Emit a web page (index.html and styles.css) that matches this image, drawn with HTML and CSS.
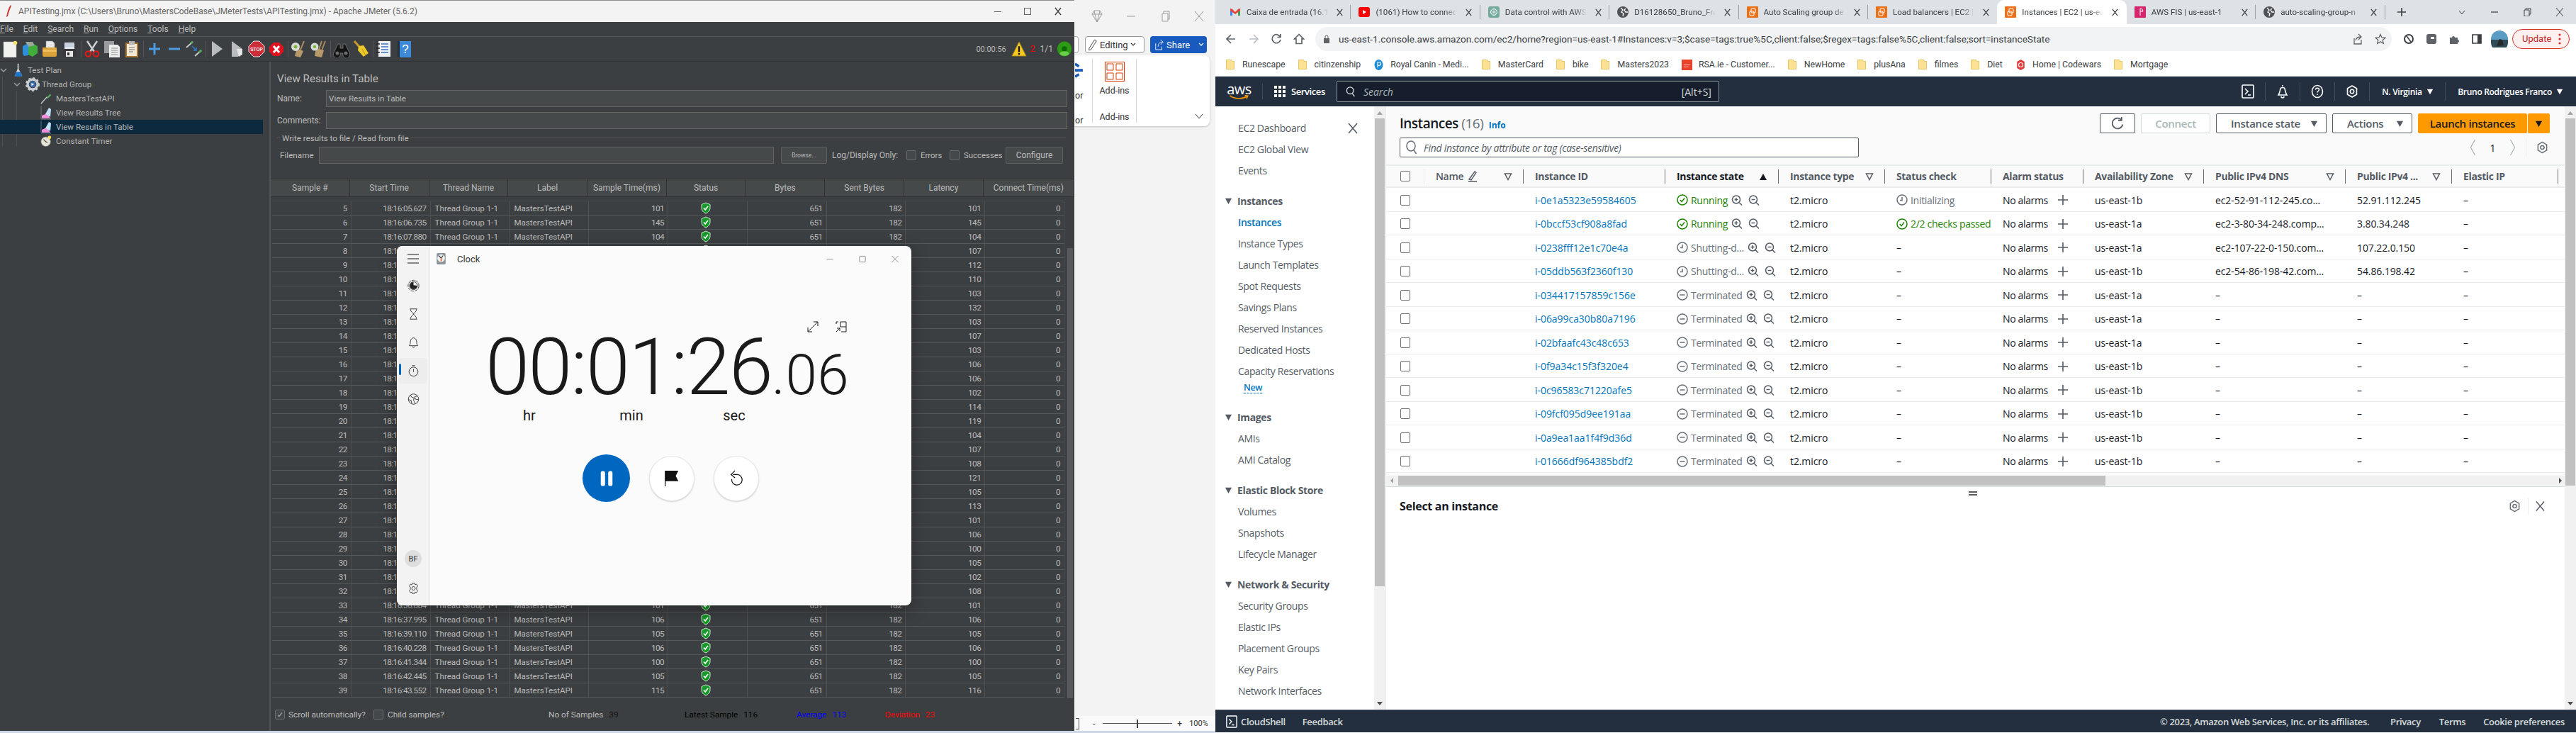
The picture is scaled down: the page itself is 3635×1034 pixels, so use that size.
FILE: index.html
```html
<!DOCTYPE html>
<html lang="en">
<head>
<meta charset="utf-8">
<title>Desktop</title>
<link rel="stylesheet" href="styles.css">
</head>
<body>
<svg class="defs" width="0" height="0">
  <symbol id="i-new" viewBox="0 0 24 24"><path d="M3 2h15l3 3v19H3z" fill="#f1f1ee" stroke="#aaa" stroke-width=".6"/><circle cx="19.500" cy="3.500" r="2.800" fill="#f6e26b"/></symbol>
  <symbol id="i-tpl" viewBox="0 0 24 24"><path d="M2 8l8-4v17l-6 1-2-3z" fill="#2f8fd8"/><path d="M10 9l7-4 6 3v10l-7 5-6-3z" fill="#3fae3a"/><path d="M6 2l10 0 3 5-9 2z" fill="#9aa7a0"/></symbol>
  <symbol id="i-open" viewBox="0 0 24 24"><path d="M7 1h9l3 3v9H7z" fill="#e8e8e8" stroke="#999" stroke-width=".5"/><path d="M2 10h20v11a2 2 0 0 1-2 2H4a2 2 0 0 1-2-2z" fill="#dca33a"/><path d="M2 13h20v3H2z" fill="#efc05c"/></symbol>
  <symbol id="i-save" viewBox="0 0 24 24"><path d="M2 2h20v21H2z" fill="#3a3a3e"/><path d="M5 3h14v9H5z" fill="#dfe6ee"/><path d="M6 5h12M6 8h12" stroke="#9fb2c6"/><path d="M7 15h10v8H7z" fill="#e6e6e6"/><path d="M9 17h3v4H9z" fill="#333"/></symbol>
  <symbol id="i-cut" viewBox="0 0 24 24"><path d="M5 1l10 15M19 1L9 16" stroke="#cfd2d4" stroke-width="2.400"/><circle cx="6.500" cy="19" r="3.700" fill="none" stroke="#d81c1c" stroke-width="2.300"/><circle cx="17.500" cy="19" r="3.700" fill="none" stroke="#d81c1c" stroke-width="2.300"/></symbol>
  <symbol id="i-copy" viewBox="0 0 24 24"><path d="M1 1h14v17H1z" fill="#9a9d9f"/><path d="M8 6h12l3 3v15H8z" fill="#ececec"/><path d="M11 11h9M11 14h9M11 17h9M11 20h9" stroke="#8e8e8e"/></symbol>
  <symbol id="i-paste" viewBox="0 0 24 24"><path d="M3 3h18v21H3z" fill="#a9742d"/><path d="M5 5h14v17H5z" fill="#f1ead8"/><path d="M8 1h8v5H8z" fill="#b5b5b5"/><path d="M8 10h8M8 13h8M8 16h6" stroke="#777"/></symbol>
  <symbol id="i-plus" viewBox="0 0 24 24"><path d="M12 4v16M4 12h16" stroke="#4a9be0" stroke-width="3"/></symbol>
  <symbol id="i-minus" viewBox="0 0 24 24"><path d="M4 12h16" stroke="#4a9be0" stroke-width="3"/></symbol>
  <symbol id="i-tog" viewBox="0 0 24 24"><path d="M1 10l9-8" stroke="#c6cac6" stroke-width="2"/><path d="M7 4l3-2" stroke="#5aa85a" stroke-width="3"/><path d="M13 22l9-8" stroke="#c6cac6" stroke-width="2"/><path d="M19 17l3-3" stroke="#5aa85a" stroke-width="3"/><path d="M9 8l6 6m0-4v4h-4" stroke="#2e7fd8" stroke-width="1.400" fill="none"/></symbol>
  <symbol id="i-play" viewBox="0 0 24 24"><path d="M5 1l15 11L5 23z" fill="#b9bcbe"/></symbol>
  <symbol id="i-play2" viewBox="0 0 24 24"><path d="M5 1l15 11v8l-4 0-2 3-9 0z" fill="#b9bcbe"/><path d="M12 12l8 0 0 8-5 3z" fill="#e5e5e5"/></symbol>
  <symbol id="i-stop" viewBox="0 0 24 24"><path d="M8 1h8l7 7v8l-7 7H8l-7-7V8z" fill="#cc2f3a" stroke="#e9e9e9"/><text x="12" y="15" text-anchor="middle" class="stoptxt">STOP</text></symbol>
  <symbol id="i-shut" viewBox="0 0 24 24"><path d="M8 3h8l6 6v7l-6 6H8l-6-6V9z" fill="#e1131f"/><path d="M8 8l8 9M16 8l-8 9" stroke="#fff" stroke-width="3"/></symbol>
  <symbol id="i-clr" viewBox="0 0 24 24"><path d="M19 1l-5 12" stroke="#a88a5c" stroke-width="2"/><path d="M9 11l9 4-4 9-8-2z" fill="#b89a6a"/><circle cx="7" cy="9" r="6" fill="#d8dcd6"/><circle cx="7" cy="9" r="2.500" fill="#7fb43c"/></symbol>
  <symbol id="i-clra" viewBox="0 0 24 24"><path d="M21 1l-5 13M16 1l-4 12" stroke="#a88a5c" stroke-width="2"/><path d="M8 11l11 3-3 10-10-2z" fill="#b89a6a"/><circle cx="6" cy="9" r="5.500" fill="#d8dcd6"/><circle cx="6" cy="9" r="2.200" fill="#7fb43c"/></symbol>
  <symbol id="i-bino" viewBox="0 0 24 24"><path d="M7 5h3v6h4V5h3l6 12a5 5 0 1 1-9 1h-4a5 5 0 1 1-9-1z" fill="#141414" stroke="#8a8a8a" stroke-width=".7"/><circle cx="6" cy="18" r="2.500" fill="#6c6c6c"/><circle cx="18" cy="18" r="2.500" fill="#6c6c6c"/></symbol>
  <symbol id="i-brm" viewBox="0 0 24 24"><path d="M2 1l8 9" stroke="#c89a2a" stroke-width="3"/><path d="M8 8l7-1 7 11-7 5-8-9z" fill="#edc829"/><path d="M13 12l5 9" stroke="#b99517"/></symbol>
  <symbol id="i-fn" viewBox="0 0 24 24"><path d="M4 1h17v22H4z" fill="#eef2f7"/><path d="M1 5h5M1 11h5M1 17h5" stroke="#222" stroke-width="1.500"/><path d="M8 5h10M8 9h10M8 13h10M8 17h10" stroke="#3a74c0" stroke-width="1.300"/></symbol>
  <symbol id="i-help" viewBox="0 0 24 24"><path d="M3 1h19v23H3z" fill="#3f8ad8"/><path d="M3 1h3v23H3z" fill="#23303a"/><text x="14" y="18" text-anchor="middle" class="helptxt">?</text></symbol>
  <symbol id="i-warn" viewBox="0 0 24 24"><path d="M12 1l11 22H1z" fill="#f4c81f" stroke="#99811a"/><path d="M12 8v9M12 18.500v2.500" stroke="#111" stroke-width="2.500"/></symbol>
  <symbol id="i-ball" viewBox="0 0 24 24"><ellipse cx="12" cy="12" rx="11" ry="11.500" fill="#2d9c12"/><ellipse cx="12" cy="12" rx="4" ry="4" fill="#0a6b05"/><ellipse cx="12" cy="19" rx="7" ry="3.500" fill="#6ad04e"/></symbol>
  <symbol id="i-flask" viewBox="0 0 16 24"><path d="M6.500 1h2v9l6 12H1.500l5-12z" fill="#cfd3d6"/><path d="M4 15h7.500l3 7.500H1.500z" fill="#1e74c8"/></symbol>
  <symbol id="i-gear" viewBox="0 0 20 20"><circle cx="10" cy="10" r="7" fill="none" stroke="#c8ccd0" stroke-width="3.400"/><circle cx="10" cy="10" r="9" fill="none" stroke="#c8ccd0" stroke-width="2" stroke-dasharray="3 3.050"/><circle cx="10" cy="10" r="4.400" fill="#3b6fb0"/><path d="M8.500 8l3.500 2-3.500 2z" fill="#fff"/></symbol>
  <symbol id="i-drop" viewBox="0 0 20 20"><path d="M1 19L12 7" stroke="#c3c6c8" stroke-width="1.800"/><path d="M11 9l6-7 2 2-6 6z" fill="#5fae5f"/></symbol>
  <symbol id="i-graph" viewBox="0 0 16 20"><path d="M1 1v18h14" stroke="#8a8d90" fill="none" stroke-width=".7"/><path d="M2 18v-4l7-3 5 7z" fill="#f08fd9"/><path d="M7 12l5-9 3 2-1 11z" fill="#c6e0f5"/></symbol>
  <symbol id="i-timer" viewBox="0 0 20 20"><circle cx="9.500" cy="11" r="8.500" fill="#e7e5d8" stroke="#77787a"/><path d="M9.500 11l-4-4M9.500 11l3 2" stroke="#333" stroke-width="1.300"/><circle cx="16" cy="3.500" r="3" fill="#f2e35c"/></symbol>
  <symbol id="sh" viewBox="0 0 14 16"><path d="M7 .5l6 2.500v5c0 3.500-3 6.500-6 7.500-3-1-6-4-6-7.500V3z" fill="#159a28" stroke="#d8e3d8"/><path d="M4 8l2.200 2.400L10 5.500" stroke="#fff" stroke-width="1.700" fill="none"/></symbol>

  <symbol id="c-world" viewBox="0 0 20 20" fill="none" stroke="currentColor"><circle cx="10" cy="10" r="9" stroke-dasharray="5 1.500"/><circle cx="10" cy="10" r="6.500"/><path d="M10 4a6 6 0 1 0 6 6l-6-1z" fill="currentColor" stroke="none"/></symbol>
  <symbol id="c-hour" viewBox="0 0 20 20" fill="none" stroke="currentColor"><path d="M4 1.500h12M4 18.500h12M5 2c0 5 5 6 5 8s-5 3-5 8M15 2c0 5-5 6-5 8s5 3 5 8"/></symbol>
  <symbol id="c-bell" viewBox="0 0 20 20" fill="none" stroke="currentColor"><path d="M3 15.500c2-2 1.500-5 2-8C5.700 4 8 2.500 10 2.500S14.300 4 15 7.500c.5 3 0 6 2 8zM8 16.500c0 2.500 4 2.500 4 0"/></symbol>
  <symbol id="c-stop" viewBox="0 0 20 20" fill="none" stroke="currentColor"><circle cx="10" cy="11.500" r="7.500"/><path d="M7.500 1.500h5M10 7v5"/></symbol>
  <symbol id="c-globe" viewBox="0 0 20 20" fill="none" stroke="currentColor"><circle cx="10" cy="10" r="8.500"/><path d="M5 3l2 4 4 1-1 4 3 5M16 5l-4 1 1 4 5 1M2 11l4 1 1 5"/></symbol>
  <symbol id="c-set" viewBox="0 0 20 20" fill="none" stroke="currentColor"><path d="M8 1.500h4l.7 2.500 2.300-1 2 3.500-1.800 1.800v3.400L17 13.500l-2 3.500-2.300-1-.7 2.500H8l-.7-2.500-2.300 1-2-3.500 1.800-1.800V8.300L3 6.500 5 3l2.300 1z"/><circle cx="10" cy="10" r="3"/></symbol>

  <symbol id="w-folder" viewBox="0 0 12 14"><path d="M.5.500h7l1 2h3v11H.5z" fill="#fde293" stroke="#e6c462"/></symbol>
  <symbol id="a-orange" viewBox="0 0 16 16"><rect width="16" height="16" rx="1" fill="#e8711a"/><rect x="6" y="3" width="6" height="6" rx="1" fill="none" stroke="#fff"/><rect x="4" y="7" width="6" height="6" rx="1" fill="none" stroke="#fff"/></symbol>
  <symbol id="a-pink" viewBox="0 0 16 16"><rect width="16" height="16" rx="1" fill="#d6246e"/><path d="M8 3a4 4 0 0 1 4 4H8zM8 7v6" stroke="#fff" fill="none"/></symbol>
  <symbol id="a-globe" viewBox="0 0 16 16"><circle cx="8" cy="8" r="8" fill="#4f5358"/><path d="M5 2l3 3-2 3 3 2-1 4M12 3l-2 2 2 3 3 0" stroke="#fff" fill="none" stroke-width="1.300"/></symbol>
  <symbol id="x" viewBox="0 0 12 12"><path d="M2 1l8 10M10 1L2 11" stroke="#3c4043" stroke-width="1.400"/></symbol>

  <symbol id="s-ok" viewBox="0 0 16 16" fill="none"><circle cx="8" cy="8" r="7" stroke="#1d8102" stroke-width="1.500"/><path d="M4.800 8l2.300 2.600L11 5.500" stroke="#1d8102" stroke-width="1.500"/></symbol>
  <symbol id="s-clock" viewBox="0 0 16 16" fill="none"><circle cx="8" cy="8" r="7" stroke="#687078" stroke-width="1.500"/><path d="M8 4v4.500H5" stroke="#687078" stroke-width="1.500"/></symbol>
  <symbol id="s-term" viewBox="0 0 16 16" fill="none"><circle cx="8" cy="8" r="7" stroke="#687078" stroke-width="1.500"/><path d="M4.500 8h7" stroke="#687078" stroke-width="1.500"/></symbol>
  <symbol id="z-in" viewBox="0 0 16 16" fill="none"><circle cx="7" cy="7" r="5.500" stroke="#545b64" stroke-width="1.500"/><path d="M7 4.500v5M4.500 7h5M11 11l4 4" stroke="#545b64" stroke-width="1.500"/></symbol>
  <symbol id="z-out" viewBox="0 0 16 16" fill="none"><circle cx="7" cy="7" r="5.500" stroke="#545b64" stroke-width="1.500"/><path d="M4.500 7h5M11 11l4 4" stroke="#545b64" stroke-width="1.500"/></symbol>
  <symbol id="a-plus" viewBox="0 0 16 16"><path d="M8 1v14M1 8h14" stroke="#545b64" stroke-width="1.600"/></symbol>
  <symbol id="f-tri" viewBox="0 0 12 12"><path d="M1.500 2h9L6 10.500z" fill="none" stroke="#545b64" stroke-width="1.500"/></symbol>
  <symbol id="d-tri" viewBox="0 0 12 12"><path d="M1 2h10L6 11z" fill="currentColor"/></symbol>
  <symbol id="u-tri" viewBox="0 0 12 12"><path d="M1 11h10L6 2z" fill="currentColor"/></symbol>
  <symbol id="a-gear" viewBox="0 0 18 18" fill="none" stroke="currentColor" stroke-width="1.600"><path d="M9 1l6.500 3.800v8.400L9 17l-6.500-3.800V4.800z" stroke-linejoin="round"/><circle cx="9" cy="9" r="2.700"/></symbol>
  <symbol id="a-shell" viewBox="0 0 18 20" fill="none" stroke="currentColor" stroke-width="1.600"><rect x="1" y="1" width="16" height="18" rx="1"/><path d="M5 6l4 4-4 4M9 15h4"/></symbol>
</svg>

<section class="jm">
  <header class="jm-title">
    <svg class="jm-feather" viewBox="0 0 10 20"><path d="M8 1C5 5 3 11 2 18l2-1c1-5 3-10 5-15z" fill="#d3382c"/></svg>
    <span class="jm-title-t">APITesting.jmx (C:\Users\Bruno\MastersCodeBase\JMeterTests\APITesting.jmx) - Apache JMeter (5.6.2)</span>
    <span class="jm-ctrl"><span class="jm-c-min"></span><span class="jm-c-max"></span><svg class="jm-c-x"><use href="#x"/></svg></span>
  </header>
  <nav class="jm-menu"><span><u>F</u>ile</span><span><u>E</u>dit</span><span><u>S</u>earch</span><span><u>R</u>un</span><span><u>O</u>ptions</span><span><u>T</u>ools</span><span><u>H</u>elp</span></nav>
  <div class="jm-tools">
    <svg class="tb"><use href="#i-new"/></svg><svg class="tb"><use href="#i-tpl"/></svg><svg class="tb"><use href="#i-open"/></svg><svg class="tb"><use href="#i-save"/></svg><span class="tb-sep"></span>
    <svg class="tb"><use href="#i-cut"/></svg><svg class="tb"><use href="#i-copy"/></svg><svg class="tb"><use href="#i-paste"/></svg><span class="tb-sep"></span>
    <svg class="tb"><use href="#i-plus"/></svg><svg class="tb"><use href="#i-minus"/></svg><svg class="tb"><use href="#i-tog"/></svg><span class="tb-sep"></span>
    <svg class="tb"><use href="#i-play"/></svg><svg class="tb"><use href="#i-play2"/></svg><svg class="tb"><use href="#i-stop"/></svg><svg class="tb"><use href="#i-shut"/></svg><span class="tb-sep"></span>
    <svg class="tb"><use href="#i-clr"/></svg><svg class="tb"><use href="#i-clra"/></svg><span class="tb-sep"></span>
    <svg class="tb"><use href="#i-bino"/></svg><svg class="tb"><use href="#i-brm"/></svg><span class="tb-sep"></span>
    <svg class="tb"><use href="#i-fn"/></svg><svg class="tb"><use href="#i-help"/></svg>
    <span class="jm-stat"><span class="jm-elapsed">00:00:56</span><svg class="jm-warn"><use href="#i-warn"/></svg><span class="jm-err">2</span><span class="jm-count">1/1</span><svg class="jm-ball"><use href="#i-ball"/></svg></span>
  </div>
  <div class="jm-body">
    <aside class="jm-tree">
      <div class="tr tr0"><svg class="tr-car" viewBox="0 0 10 10"><path d="M1 3l4 4 4-4" fill="none" stroke="#9a9d9f" stroke-width="1.500"/></svg><svg class="tr-ic"><use href="#i-flask"/></svg>Test Plan</div>
      <div class="tr tr1"><svg class="tr-car" viewBox="0 0 10 10"><path d="M1 3l4 4 4-4" fill="none" stroke="#9a9d9f" stroke-width="1.500"/></svg><svg class="tr-ic"><use href="#i-gear"/></svg>Thread Group</div>
      <div class="tr tr2"><svg class="tr-ic"><use href="#i-drop"/></svg>MastersTestAPI</div>
      <div class="tr tr2"><svg class="tr-ic"><use href="#i-graph"/></svg>View Results Tree</div>
      <div class="tr tr2 tr-sel"><svg class="tr-ic"><use href="#i-graph"/></svg>View Results in Table</div>
      <div class="tr tr2"><svg class="tr-ic"><use href="#i-timer"/></svg>Constant Timer</div>
    </aside>
    <main class="jm-main">
      <h1 class="jm-h">View Results in Table</h1>
      <div class="jm-field"><label>Name:</label><span class="jm-input">View Results in Table</span></div>
      <div class="jm-field jm-field2"><label>Comments:</label><span class="jm-input"></span></div>
      <div class="jm-legend"><span>Write results to file / Read from file</span></div>
      <div class="jm-file">
        <label class="jm-fl">Filename</label><span class="jm-input jm-fi"></span>
        <span class="jm-btn jm-browse">Browse...</span>
        <span class="jm-log">Log/Display Only:</span>
        <span class="jm-cb"></span><span class="jm-cbt jm-err-t">Errors</span>
        <span class="jm-cb"></span><span class="jm-cbt jm-suc-t">Successes</span>
        <span class="jm-btn jm-conf">Configure</span>
      </div>
      <div class="jh"><span>Sample #</span><span>Start Time</span><span>Thread Name</span><span>Label</span><span>Sample Time(ms)</span><span>Status</span><span>Bytes</span><span>Sent Bytes</span><span>Latency</span><span>Connect Time(ms)</span></div>
      <div class="jt">
        <div class="jrows">
          <div class="jr"><span>5</span><span>18:16:05.627</span><span class="l">Thread Group 1-1</span><span class="l">MastersTestAPI</span><span>101</span><span class="c"><svg class="sh"><use href="#sh"/></svg></span><span>651</span><span>182</span><span>101</span><span>0</span></div>
          <div class="jr"><span>6</span><span>18:16:06.735</span><span class="l">Thread Group 1-1</span><span class="l">MastersTestAPI</span><span>145</span><span class="c"><svg class="sh"><use href="#sh"/></svg></span><span>651</span><span>182</span><span>145</span><span>0</span></div>
          <div class="jr"><span>7</span><span>18:16:07.880</span><span class="l">Thread Group 1-1</span><span class="l">MastersTestAPI</span><span>104</span><span class="c"><svg class="sh"><use href="#sh"/></svg></span><span>651</span><span>182</span><span>104</span><span>0</span></div>
          <div class="jr"><span>8</span><span>18:16:08.987</span><span class="l">Thread Group 1-1</span><span class="l">MastersTestAPI</span><span>107</span><span class="c"><svg class="sh"><use href="#sh"/></svg></span><span>651</span><span>182</span><span>107</span><span>0</span></div>
          <div class="jr"><span>9</span><span>18:16:10.098</span><span class="l">Thread Group 1-1</span><span class="l">MastersTestAPI</span><span>112</span><span class="c"><svg class="sh"><use href="#sh"/></svg></span><span>651</span><span>182</span><span>112</span><span>0</span></div>
          <div class="jr"><span>10</span><span>18:16:11.213</span><span class="l">Thread Group 1-1</span><span class="l">MastersTestAPI</span><span>110</span><span class="c"><svg class="sh"><use href="#sh"/></svg></span><span>651</span><span>182</span><span>110</span><span>0</span></div>
          <div class="jr"><span>11</span><span>18:16:12.326</span><span class="l">Thread Group 1-1</span><span class="l">MastersTestAPI</span><span>103</span><span class="c"><svg class="sh"><use href="#sh"/></svg></span><span>651</span><span>182</span><span>103</span><span>0</span></div>
          <div class="jr"><span>12</span><span>18:16:13.432</span><span class="l">Thread Group 1-1</span><span class="l">MastersTestAPI</span><span>132</span><span class="c"><svg class="sh"><use href="#sh"/></svg></span><span>651</span><span>182</span><span>132</span><span>0</span></div>
          <div class="jr"><span>13</span><span>18:16:14.567</span><span class="l">Thread Group 1-1</span><span class="l">MastersTestAPI</span><span>103</span><span class="c"><svg class="sh"><use href="#sh"/></svg></span><span>651</span><span>182</span><span>103</span><span>0</span></div>
          <div class="jr"><span>14</span><span>18:16:15.674</span><span class="l">Thread Group 1-1</span><span class="l">MastersTestAPI</span><span>107</span><span class="c"><svg class="sh"><use href="#sh"/></svg></span><span>651</span><span>182</span><span>107</span><span>0</span></div>
          <div class="jr"><span>15</span><span>18:16:16.785</span><span class="l">Thread Group 1-1</span><span class="l">MastersTestAPI</span><span>103</span><span class="c"><svg class="sh"><use href="#sh"/></svg></span><span>651</span><span>182</span><span>103</span><span>0</span></div>
          <div class="jr"><span>16</span><span>18:16:17.891</span><span class="l">Thread Group 1-1</span><span class="l">MastersTestAPI</span><span>106</span><span class="c"><svg class="sh"><use href="#sh"/></svg></span><span>651</span><span>182</span><span>106</span><span>0</span></div>
          <div class="jr"><span>17</span><span>18:16:19.000</span><span class="l">Thread Group 1-1</span><span class="l">MastersTestAPI</span><span>106</span><span class="c"><svg class="sh"><use href="#sh"/></svg></span><span>651</span><span>182</span><span>106</span><span>0</span></div>
          <div class="jr"><span>18</span><span>18:16:20.109</span><span class="l">Thread Group 1-1</span><span class="l">MastersTestAPI</span><span>102</span><span class="c"><svg class="sh"><use href="#sh"/></svg></span><span>651</span><span>182</span><span>102</span><span>0</span></div>
          <div class="jr"><span>19</span><span>18:16:21.214</span><span class="l">Thread Group 1-1</span><span class="l">MastersTestAPI</span><span>114</span><span class="c"><svg class="sh"><use href="#sh"/></svg></span><span>651</span><span>182</span><span>114</span><span>0</span></div>
          <div class="jr"><span>20</span><span>18:16:22.330</span><span class="l">Thread Group 1-1</span><span class="l">MastersTestAPI</span><span>119</span><span class="c"><svg class="sh"><use href="#sh"/></svg></span><span>651</span><span>182</span><span>119</span><span>0</span></div>
          <div class="jr"><span>21</span><span>18:16:23.452</span><span class="l">Thread Group 1-1</span><span class="l">MastersTestAPI</span><span>104</span><span class="c"><svg class="sh"><use href="#sh"/></svg></span><span>651</span><span>182</span><span>104</span><span>0</span></div>
          <div class="jr"><span>22</span><span>18:16:24.558</span><span class="l">Thread Group 1-1</span><span class="l">MastersTestAPI</span><span>107</span><span class="c"><svg class="sh"><use href="#sh"/></svg></span><span>651</span><span>182</span><span>107</span><span>0</span></div>
          <div class="jr"><span>23</span><span>18:16:25.668</span><span class="l">Thread Group 1-1</span><span class="l">MastersTestAPI</span><span>108</span><span class="c"><svg class="sh"><use href="#sh"/></svg></span><span>651</span><span>182</span><span>108</span><span>0</span></div>
          <div class="jr"><span>24</span><span>18:16:26.778</span><span class="l">Thread Group 1-1</span><span class="l">MastersTestAPI</span><span>121</span><span class="c"><svg class="sh"><use href="#sh"/></svg></span><span>651</span><span>182</span><span>121</span><span>0</span></div>
          <div class="jr"><span>25</span><span>18:16:27.902</span><span class="l">Thread Group 1-1</span><span class="l">MastersTestAPI</span><span>105</span><span class="c"><svg class="sh"><use href="#sh"/></svg></span><span>651</span><span>182</span><span>105</span><span>0</span></div>
          <div class="jr"><span>26</span><span>18:16:29.010</span><span class="l">Thread Group 1-1</span><span class="l">MastersTestAPI</span><span>113</span><span class="c"><svg class="sh"><use href="#sh"/></svg></span><span>651</span><span>182</span><span>113</span><span>0</span></div>
          <div class="jr"><span>27</span><span>18:16:30.126</span><span class="l">Thread Group 1-1</span><span class="l">MastersTestAPI</span><span>101</span><span class="c"><svg class="sh"><use href="#sh"/></svg></span><span>651</span><span>182</span><span>101</span><span>0</span></div>
          <div class="jr"><span>28</span><span>18:16:31.231</span><span class="l">Thread Group 1-1</span><span class="l">MastersTestAPI</span><span>106</span><span class="c"><svg class="sh"><use href="#sh"/></svg></span><span>651</span><span>182</span><span>106</span><span>0</span></div>
          <div class="jr"><span>29</span><span>18:16:32.340</span><span class="l">Thread Group 1-1</span><span class="l">MastersTestAPI</span><span>100</span><span class="c"><svg class="sh"><use href="#sh"/></svg></span><span>651</span><span>182</span><span>100</span><span>0</span></div>
          <div class="jr"><span>30</span><span>18:16:33.443</span><span class="l">Thread Group 1-1</span><span class="l">MastersTestAPI</span><span>105</span><span class="c"><svg class="sh"><use href="#sh"/></svg></span><span>651</span><span>182</span><span>105</span><span>0</span></div>
          <div class="jr"><span>31</span><span>18:16:34.551</span><span class="l">Thread Group 1-1</span><span class="l">MastersTestAPI</span><span>102</span><span class="c"><svg class="sh"><use href="#sh"/></svg></span><span>651</span><span>182</span><span>102</span><span>0</span></div>
          <div class="jr"><span>32</span><span>18:16:35.656</span><span class="l">Thread Group 1-1</span><span class="l">MastersTestAPI</span><span>108</span><span class="c"><svg class="sh"><use href="#sh"/></svg></span><span>651</span><span>182</span><span>108</span><span>0</span></div>
          <div class="jr"><span>33</span><span>18:16:36.884</span><span class="l">Thread Group 1-1</span><span class="l">MastersTestAPI</span><span>101</span><span class="c"><svg class="sh"><use href="#sh"/></svg></span><span>651</span><span>182</span><span>101</span><span>0</span></div>
          <div class="jr"><span>34</span><span>18:16:37.995</span><span class="l">Thread Group 1-1</span><span class="l">MastersTestAPI</span><span>106</span><span class="c"><svg class="sh"><use href="#sh"/></svg></span><span>651</span><span>182</span><span>106</span><span>0</span></div>
          <div class="jr"><span>35</span><span>18:16:39.110</span><span class="l">Thread Group 1-1</span><span class="l">MastersTestAPI</span><span>105</span><span class="c"><svg class="sh"><use href="#sh"/></svg></span><span>651</span><span>182</span><span>105</span><span>0</span></div>
          <div class="jr"><span>36</span><span>18:16:40.228</span><span class="l">Thread Group 1-1</span><span class="l">MastersTestAPI</span><span>106</span><span class="c"><svg class="sh"><use href="#sh"/></svg></span><span>651</span><span>182</span><span>106</span><span>0</span></div>
          <div class="jr"><span>37</span><span>18:16:41.344</span><span class="l">Thread Group 1-1</span><span class="l">MastersTestAPI</span><span>100</span><span class="c"><svg class="sh"><use href="#sh"/></svg></span><span>651</span><span>182</span><span>100</span><span>0</span></div>
          <div class="jr"><span>38</span><span>18:16:42.445</span><span class="l">Thread Group 1-1</span><span class="l">MastersTestAPI</span><span>105</span><span class="c"><svg class="sh"><use href="#sh"/></svg></span><span>651</span><span>182</span><span>105</span><span>0</span></div>
          <div class="jr"><span>39</span><span>18:16:43.552</span><span class="l">Thread Group 1-1</span><span class="l">MastersTestAPI</span><span>115</span><span class="c"><svg class="sh"><use href="#sh"/></svg></span><span>651</span><span>182</span><span>116</span><span>0</span></div>
        </div>
        <div class="jscroll"></div>
      </div>
      <div class="jb">
        <span class="jb1"><span class="jm-cb jm-cb-on">&#10003;</span>Scroll automatically?</span>
        <span class="jb2"><span class="jm-cb"></span>Child samples?</span>
        <span class="jb3">No of Samples <b class="jb-d">39</b></span>
        <span class="jb4">Latest Sample <b>116</b></span>
        <span class="jb5">Average <b>113</b></span>
        <span class="jb6">Deviation <b>23</b></span>
      </div>
    </main>
  </div>
</section>

<section class="word">
  <div class="wd-title">
    <svg class="wd-ic" viewBox="0 0 16 18"><path d="M4 1h8l3 5-7 11L1 6zM1 6h14M5 6l3 11 3-11M4 1l1 5M12 1l-1 5" fill="none" stroke="#9b9b9b"/></svg>
    <svg class="wd-ic" viewBox="0 0 16 18"><path d="M2 9h12" stroke="#9b9b9b"/></svg>
    <svg class="wd-ic" viewBox="0 0 16 18"><path d="M4 5h8v11H4zM6 5V2h8v11h-2" fill="none" stroke="#9b9b9b"/></svg>
    <svg class="wd-ic" viewBox="0 0 16 18"><path d="M2 2l12 14M14 2L2 16" stroke="#9b9b9b"/></svg>
  </div>
  <div class="wd-btns">
    <span class="wd-sliver"></span>
    <span class="wd-edit"><svg class="wd-pen" viewBox="0 0 16 20"><path d="M11 2l3 2-9 14-3 1 0-3z" fill="none" stroke="#333"/></svg>Editing<svg class="wd-chev" viewBox="0 0 8 8"><path d="M1 2l3 3 3-3" fill="none" stroke="#333" stroke-width="1.200"/></svg></span>
    <span class="wd-share"><svg class="wd-pen" viewBox="0 0 16 20"><path d="M2 8v10h10v-5M6 13c0-5 3-7 7-7M10 2l4 4-4 4" fill="none" stroke="#fff"/></svg>Share<svg class="wd-chev2" viewBox="0 0 8 8"><path d="M1 2l3 3 3-3" fill="none" stroke="#fff" stroke-width="1.300"/></svg></span>
  </div>
  <div class="wd-rib">
    <div class="wd-part"><svg class="wd-parti" viewBox="0 0 12 30"><path d="M0 13h12M0 3l6 4M0 23l6-4" stroke="#185abd" stroke-width="4"/></svg><span class="wd-partt">or</span><span class="wd-partb">or</span></div>
    <div class="wd-add"><svg class="wd-addi" viewBox="0 0 28 28"><path d="M.5.500h27v27H.5z" fill="none" stroke="#d83b01"/><path d="M3 3h9v9H3zM16 3h9v9h-9zM3 16h9v9H3zM16 16h9v9h-9z" fill="none" stroke="#d83b01"/></svg><span class="wd-addt">Add-ins</span><span class="wd-addb">Add-ins</span></div>
    <svg class="wd-down" viewBox="0 0 12 8"><path d="M1 1l5 6 5-6" fill="none" stroke="#333"/></svg>
  </div>
  <div class="wd-status"><span class="wd-st-ic"></span><span class="wd-minus">-</span><span class="wd-slider"><span class="wd-knob"></span></span><span class="wd-plus">+</span><span class="wd-pct">100%</span></div>
</section>

<section class="chrome">
  <div class="tabs">
    <div class="tab"><svg class="tab-ic" viewBox="0 0 16 16"><path d="M1 3v10h3V7z" fill="#4285f4"/><path d="M15 3v10h-3V7z" fill="#34a853"/><path d="M1 3l3 1 4 4 4-4 3-1v3L8 11 1 6z" fill="#ea4335"/></svg><span class="tab-t">Caixa de entrada (16.1</span><svg class="tab-x"><use href="#x"/></svg></div>
    <div class="tab"><svg class="tab-ic" viewBox="0 0 16 16"><rect y="1" width="16" height="14" rx="3" fill="#f00"/><path d="M6 5l5 3-5 3z" fill="#fff"/></svg><span class="tab-t">(1061) How to connect</span><svg class="tab-x"><use href="#x"/></svg></div>
    <div class="tab"><svg class="tab-ic" viewBox="0 0 16 16"><rect width="16" height="16" rx="3" fill="#74aa9c"/><circle cx="8" cy="8" r="4.500" fill="none" stroke="#fff"/><path d="M8 3.500v9M4 6l8 4M12 6l-8 4" stroke="#fff" stroke-width=".6"/></svg><span class="tab-t">Data control with AWS</span><svg class="tab-x"><use href="#x"/></svg></div>
    <div class="tab"><svg class="tab-ic"><use href="#a-globe"/></svg><span class="tab-t">D16128650_Bruno_Fra</span><svg class="tab-x"><use href="#x"/></svg></div>
    <div class="tab"><svg class="tab-ic"><use href="#a-orange"/></svg><span class="tab-t">Auto Scaling group de</span><svg class="tab-x"><use href="#x"/></svg></div>
    <div class="tab tab-pre"><svg class="tab-ic"><use href="#a-orange"/></svg><span class="tab-t">Load balancers | EC2 |</span><svg class="tab-x"><use href="#x"/></svg></div>
    <div class="tab tab-on"><svg class="tab-ic"><use href="#a-orange"/></svg><span class="tab-t">Instances | EC2 | us-ea</span><svg class="tab-x"><use href="#x"/></svg></div>
    <div class="tab"><svg class="tab-ic"><use href="#a-pink"/></svg><span class="tab-t">AWS FIS | us-east-1</span><svg class="tab-x"><use href="#x"/></svg></div>
    <div class="tab"><svg class="tab-ic"><use href="#a-globe"/></svg><span class="tab-t">auto-scaling-group-n</span><svg class="tab-x"><use href="#x"/></svg></div>
    <svg class="tab-new" viewBox="0 0 14 14"><path d="M7 1v12M1 7h12" stroke="#3c4043" stroke-width="1.600"/></svg>
    <span class="win-ctl">
      <svg viewBox="0 0 12 12"><path d="M2 4l4 5 4-5" fill="none" stroke="#3c4043"/></svg>
      <svg viewBox="0 0 12 12"><path d="M1 6h10" stroke="#3c4043" stroke-width="1.200"/></svg>
      <svg viewBox="0 0 12 12"><path d="M2 3h7v9H2zM4 3V1h7v8H9" fill="none" stroke="#3c4043"/></svg>
      <svg viewBox="0 0 12 12"><path d="M1 0l10 12M11 0L1 12" stroke="#3c4043"/></svg>
    </span>
  </div>
  <div class="omni-row">
    <svg class="nav-ic" viewBox="0 0 16 16"><path d="M14 8H2M8 2L2 8l6 6" fill="none" stroke="#5f6368" stroke-width="1.700"/></svg>
    <svg class="nav-ic nav-dim" viewBox="0 0 16 16"><path d="M2 8h12M8 2l6 6-6 6" fill="none" stroke="#bdc1c6" stroke-width="1.700"/></svg>
    <svg class="nav-ic" viewBox="0 0 16 16"><path d="M13.500 5A6 6 0 1 0 14 9M14 1v4.500H9.500" fill="none" stroke="#5f6368" stroke-width="1.700"/></svg>
    <svg class="nav-ic" viewBox="0 0 16 16"><path d="M8 1.500L1.500 8H4v6.500h8V8h2.500z" fill="none" stroke="#5f6368" stroke-width="1.700"/></svg>
    <div class="omni">
      <svg class="lock" viewBox="0 0 10 12"><path d="M1 5h8v7H1z" fill="#5f6368"/><path d="M3 5V3a2 2 0 0 1 4 0v2" fill="none" stroke="#5f6368"/></svg>
      <span class="url">us-east-1.console.aws.amazon.com/ec2/home?region=us-east-1#Instances:v=3;$case=tags:true%5C,client:false;$regex=tags:false%5C,client:false;sort=instanceState</span>
      <svg class="om-ic" viewBox="0 0 16 16"><path d="M3 7v8h10V9M5 10c1-4 4-5 7-5M9 1l4 4-4 4" fill="none" stroke="#5f6368" stroke-width="1.300"/></svg>
      <svg class="om-ic" viewBox="0 0 16 16"><path d="M8 1.500l2 4.500 4.800.4-3.600 3.200 1.100 4.800L8 11.800l-4.300 2.600 1.100-4.800L1.200 6.400 6 6z" fill="none" stroke="#5f6368" stroke-width="1.300"/></svg>
    </div>
    <svg class="ext-ic" viewBox="0 0 16 16"><circle cx="8" cy="8" r="6" fill="none" stroke="#3c4043" stroke-width="2"/><path d="M5 4l6 8" stroke="#3c4043" stroke-width="1.500"/></svg>
    <svg class="ext-ic" viewBox="0 0 16 16"><rect x="1" y="1" width="14" height="14" rx="3" fill="#5f6368"/><path d="M7 5h5v3H7z" fill="#fff"/></svg>
    <svg class="ext-ic" viewBox="0 0 16 16"><path d="M2 6h3a2 2 0 1 1 4 0h4v3a2 2 0 1 1 0 4v2H2z" fill="#5f6368"/></svg>
    <svg class="ext-ic" viewBox="0 0 16 16"><path d="M2 2h12v12H2z" fill="none" stroke="#3c4043" stroke-width="1.700"/><path d="M9 2h5v12H9z" fill="#3c4043"/></svg>
    <svg class="avatar" viewBox="0 0 24 24"><circle cx="12" cy="12" r="12" fill="#5c9bc4"/><path d="M0 13h24v4a12 12 0 0 1-24 0z" fill="#314a57"/><path d="M8 22l4-10 4 1 2 8z" fill="#26282a"/></svg>
    <span class="upd">Update<svg class="upd-dots" viewBox="0 0 4 16"><circle cx="2" cy="2" r="1.600" fill="#d93025"/><circle cx="2" cy="8" r="1.600" fill="#d93025"/><circle cx="2" cy="14" r="1.600" fill="#d93025"/></svg></span>
  </div>
  <div class="bm">
    <span class="bm-i"><svg class="bm-f"><use href="#w-folder"/></svg>Runescape</span>
    <span class="bm-i"><svg class="bm-f"><use href="#w-folder"/></svg>citinzenship</span>
    <span class="bm-i"><svg class="bm-g" viewBox="0 0 16 20"><ellipse cx="8" cy="10" rx="8" ry="10" fill="#1f8ed6"/><path d="M6 15V5h3a3 3 0 0 1 0 6H6" fill="none" stroke="#fff" stroke-width="1.500"/></svg>Royal Canin - Medi...</span>
    <span class="bm-i"><svg class="bm-f"><use href="#w-folder"/></svg>MasterCard</span>
    <span class="bm-i"><svg class="bm-f"><use href="#w-folder"/></svg>bike</span>
    <span class="bm-i"><svg class="bm-f"><use href="#w-folder"/></svg>Masters2023</span>
    <span class="bm-i"><svg class="bm-g" viewBox="0 0 16 16"><rect width="16" height="16" fill="#e8432a"/><path d="M3 8h10M3 11h7" stroke="#ffc0b2"/></svg>RSA.ie - Customer...</span>
    <span class="bm-i"><svg class="bm-f"><use href="#w-folder"/></svg>NewHome</span>
    <span class="bm-i"><svg class="bm-f"><use href="#w-folder"/></svg>plusAna</span>
    <span class="bm-i"><svg class="bm-f"><use href="#w-folder"/></svg>filmes</span>
    <span class="bm-i"><svg class="bm-f"><use href="#w-folder"/></svg>Diet</span>
    <span class="bm-i"><svg class="bm-g" viewBox="0 0 16 20"><path d="M8 0l7 4v12l-7 4-7-4V4z" fill="#e23a3a"/><circle cx="8" cy="10" r="4" fill="none" stroke="#fff" stroke-width="1.500"/></svg>Home | Codewars</span>
    <span class="bm-i"><svg class="bm-f"><use href="#w-folder"/></svg>Mortgage</span>
  </div>

  <div class="aws-nav">
    <span class="aws-logo"><span class="aws-word">aws</span><svg class="aws-smile" viewBox="0 0 32 8"><path d="M1 1c8 6 20 6 28 1M25 .5l5 1-2 4.500" fill="none" stroke="#f90" stroke-width="1.800"/></svg></span>
    <span class="an-sep"></span>
    <svg class="an-grid" viewBox="0 0 16 16"><path d="M0 0h4v4H0zM6 0h4v4H6zM12 0h4v4h-4zM0 6h4v4H0zM6 6h4v4H6zM12 6h4v4h-4zM0 12h4v4H0zM6 12h4v4H6zM12 12h4v4h-4z" fill="#fff"/></svg>
    <span class="an-serv">Services</span>
    <div class="an-search"><svg class="an-mag" viewBox="0 0 16 16"><circle cx="7" cy="6.500" r="5.500" fill="none" stroke="#d5dbdb" stroke-width="1.500"/><path d="M10.500 11l3.500 5" stroke="#d5dbdb" stroke-width="1.500"/></svg><em>Search</em><span class="an-kbd">[Alt+S]</span></div>
    <span class="an-right">
      <svg class="an-ic"><use href="#a-shell"/></svg><span class="an-v"></span>
      <svg class="an-ic" viewBox="0 0 18 20"><path d="M3 15c2-3 2-5 3-9 .6-2 5.400-2 6 0 1 4 1 6 3 9zM9 1v2M7 17a2 2 0 0 0 4 0" fill="none" stroke="#fff" stroke-width="1.600"/></svg><span class="an-v"></span>
      <svg class="an-ic" viewBox="0 0 18 20"><ellipse cx="9" cy="10" rx="7.500" ry="8.500" fill="none" stroke="#fff" stroke-width="1.600"/><path d="M6.500 7.500c0-3 5-3 5 0 0 2-2.500 2-2.500 4M9 13.500v1.500" fill="none" stroke="#fff" stroke-width="1.500"/></svg><span class="an-v"></span>
      <svg class="an-ic an-gear"><use href="#a-gear"/></svg><span class="an-v"></span>
      <span class="an-t an-reg">N. Virginia<svg class="an-car"><use href="#d-tri"/></svg></span><span class="an-v"></span>
      <span class="an-t an-usr">Bruno Rodrigues Franco<svg class="an-car"><use href="#d-tri"/></svg></span>
    </span>
  </div>

  <div class="con">
    <aside class="side">
      <div class="si si-top">EC2 Dashboard<svg class="si-x" viewBox="0 0 14 14"><path d="M1 0l12 14M13 0L1 14" stroke="#545b64" stroke-width="1.600"/></svg></div>
      <div class="si">EC2 Global View</div>
      <div class="si">Events</div>
      <div class="ss"><svg class="ss-c"><use href="#d-tri"/></svg>Instances</div>
      <div class="si si-on">Instances</div>
      <div class="si">Instance Types</div>
      <div class="si">Launch Templates</div>
      <div class="si">Spot Requests</div>
      <div class="si">Savings Plans</div>
      <div class="si">Reserved Instances</div>
      <div class="si">Dedicated Hosts</div>
      <div class="si">Capacity Reservations</div>
      <div class="si-new"><span>New</span></div>
      <div class="ss"><svg class="ss-c"><use href="#d-tri"/></svg>Images</div>
      <div class="si">AMIs</div>
      <div class="si">AMI Catalog</div>
      <div class="ss"><svg class="ss-c"><use href="#d-tri"/></svg>Elastic Block Store</div>
      <div class="si">Volumes</div>
      <div class="si">Snapshots</div>
      <div class="si">Lifecycle Manager</div>
      <div class="ss"><svg class="ss-c"><use href="#d-tri"/></svg>Network &amp; Security</div>
      <div class="si">Security Groups</div>
      <div class="si">Elastic IPs</div>
      <div class="si">Placement Groups</div>
      <div class="si">Key Pairs</div>
      <div class="si">Network Interfaces</div>
    </aside>
    <div class="vbar vbar-side"><span class="vb-up"></span><span class="vb-th"></span><span class="vb-dn"></span></div>
    <main class="inst">
      <div class="in-top">
        <h2 class="in-h">Instances <span class="in-n">(16)</span> <span class="in-info">Info</span></h2>
        <div class="in-btns">
          <span class="btn btn-r"><svg class="btn-ri" viewBox="0 0 16 18"><path d="M13 4a7 7 0 1 0 1.500 6M13 0v4.500H8.500" fill="none" stroke="#545b64" stroke-width="1.700"/></svg></span>
          <span class="btn btn-dis">Connect</span>
          <span class="btn btn-st">Instance state<svg class="btn-c"><use href="#d-tri"/></svg></span>
          <span class="btn btn-ac">Actions<svg class="btn-c"><use href="#d-tri"/></svg></span>
          <span class="btn btn-la">Launch instances</span>
          <span class="btn btn-lc"><svg class="btn-c"><use href="#d-tri"/></svg></span>
        </div>
      </div>
      <div class="in-sr">
        <div class="in-search"><svg class="in-mag" viewBox="0 0 16 20"><ellipse cx="7" cy="8" rx="6" ry="7" fill="none" stroke="#687078" stroke-width="1.500"/><path d="M10.500 13l4 6" stroke="#687078" stroke-width="1.500"/></svg><em>Find Instance by attribute or tag (case-sensitive)</em></div>
        <div class="pg"><svg class="pg-a" viewBox="0 0 8 24"><path d="M7 1L1 12l6 11" fill="none" stroke="#aab7b8" stroke-width="1.300"/></svg><span class="pg-n">1</span><svg class="pg-a" viewBox="0 0 8 24"><path d="M1 1l6 11L1 23" fill="none" stroke="#aab7b8" stroke-width="1.300"/></svg><span class="pg-sep"></span><svg class="pg-g"><use href="#a-gear"/></svg></div>
      </div>
      <div class="ar ah">
        <span class="hc hc0"><span class="cbx"></span></span>
        <span class="hc hc-n">Name<svg class="hc-p" viewBox="0 0 14 16"><path d="M2 12L10 1l2 1.500L5 13zM1 15h12" fill="none" stroke="#545b64" stroke-width="1.400"/></svg><svg class="hc-f"><use href="#f-tri"/></svg></span>
        <span class="hc">Instance ID</span>
        <span class="hc hc-b">Instance state<svg class="hc-u"><use href="#u-tri"/></svg></span>
        <span class="hc">Instance type<svg class="hc-f"><use href="#f-tri"/></svg></span>
        <span class="hc">Status check</span>
        <span class="hc">Alarm status</span>
        <span class="hc">Availability Zone<svg class="hc-f"><use href="#f-tri"/></svg></span>
        <span class="hc">Public IPv4 DNS<svg class="hc-f"><use href="#f-tri"/></svg></span>
        <span class="hc">Public IPv4 ...<svg class="hc-f"><use href="#f-tri"/></svg></span>
        <span class="hc hc-l">Elastic IP</span>
      </div>
      <div class="ar"><span class="dc0"><span class="cbx"></span></span><span></span><a class="lnk">i-0e1a5323e59584605</a><span class="st st-ok"><svg class="st-i"><use href="#s-ok"/></svg>Running<svg class="zi"><use href="#z-in"/></svg><svg class="zi"><use href="#z-out"/></svg></span><span>t2.micro</span><span class="st st-g"><svg class="st-i"><use href="#s-clock"/></svg>Initializing</span><span class="al">No alarms<svg class="al-p"><use href="#a-plus"/></svg></span><span>us-east-1b</span><span>ec2-52-91-112-245.co...</span><span>52.91.112.245</span><span>–</span></div>
      <div class="ar"><span class="dc0"><span class="cbx"></span></span><span></span><a class="lnk">i-0bccf53cf908a8fad</a><span class="st st-ok"><svg class="st-i"><use href="#s-ok"/></svg>Running<svg class="zi"><use href="#z-in"/></svg><svg class="zi"><use href="#z-out"/></svg></span><span>t2.micro</span><span class="st st-ok"><svg class="st-i"><use href="#s-ok"/></svg>2/2 checks passed</span><span class="al">No alarms<svg class="al-p"><use href="#a-plus"/></svg></span><span>us-east-1a</span><span>ec2-3-80-34-248.comp...</span><span>3.80.34.248</span><span>–</span></div>
      <div class="ar"><span class="dc0"><span class="cbx"></span></span><span></span><a class="lnk">i-0238fff12e1c70e4a</a><span class="st st-g"><svg class="st-i"><use href="#s-clock"/></svg>Shutting-d...<svg class="zi"><use href="#z-in"/></svg><svg class="zi"><use href="#z-out"/></svg></span><span>t2.micro</span><span>–</span><span class="al">No alarms<svg class="al-p"><use href="#a-plus"/></svg></span><span>us-east-1a</span><span>ec2-107-22-0-150.com...</span><span>107.22.0.150</span><span>–</span></div>
      <div class="ar"><span class="dc0"><span class="cbx"></span></span><span></span><a class="lnk">i-05ddb563f2360f130</a><span class="st st-g"><svg class="st-i"><use href="#s-clock"/></svg>Shutting-d...<svg class="zi"><use href="#z-in"/></svg><svg class="zi"><use href="#z-out"/></svg></span><span>t2.micro</span><span>–</span><span class="al">No alarms<svg class="al-p"><use href="#a-plus"/></svg></span><span>us-east-1b</span><span>ec2-54-86-198-42.com...</span><span>54.86.198.42</span><span>–</span></div>
      <div class="ar"><span class="dc0"><span class="cbx"></span></span><span></span><a class="lnk">i-034417157859c156e</a><span class="st st-g"><svg class="st-i"><use href="#s-term"/></svg>Terminated<svg class="zi"><use href="#z-in"/></svg><svg class="zi"><use href="#z-out"/></svg></span><span>t2.micro</span><span>–</span><span class="al">No alarms<svg class="al-p"><use href="#a-plus"/></svg></span><span>us-east-1a</span><span>–</span><span>–</span><span>–</span></div>
      <div class="ar"><span class="dc0"><span class="cbx"></span></span><span></span><a class="lnk">i-06a99ca30b80a7196</a><span class="st st-g"><svg class="st-i"><use href="#s-term"/></svg>Terminated<svg class="zi"><use href="#z-in"/></svg><svg class="zi"><use href="#z-out"/></svg></span><span>t2.micro</span><span>–</span><span class="al">No alarms<svg class="al-p"><use href="#a-plus"/></svg></span><span>us-east-1a</span><span>–</span><span>–</span><span>–</span></div>
      <div class="ar"><span class="dc0"><span class="cbx"></span></span><span></span><a class="lnk">i-02bfaafc43c48c653</a><span class="st st-g"><svg class="st-i"><use href="#s-term"/></svg>Terminated<svg class="zi"><use href="#z-in"/></svg><svg class="zi"><use href="#z-out"/></svg></span><span>t2.micro</span><span>–</span><span class="al">No alarms<svg class="al-p"><use href="#a-plus"/></svg></span><span>us-east-1a</span><span>–</span><span>–</span><span>–</span></div>
      <div class="ar"><span class="dc0"><span class="cbx"></span></span><span></span><a class="lnk">i-0f9a34c15f3f320e4</a><span class="st st-g"><svg class="st-i"><use href="#s-term"/></svg>Terminated<svg class="zi"><use href="#z-in"/></svg><svg class="zi"><use href="#z-out"/></svg></span><span>t2.micro</span><span>–</span><span class="al">No alarms<svg class="al-p"><use href="#a-plus"/></svg></span><span>us-east-1b</span><span>–</span><span>–</span><span>–</span></div>
      <div class="ar"><span class="dc0"><span class="cbx"></span></span><span></span><a class="lnk">i-0c96583c71220afe5</a><span class="st st-g"><svg class="st-i"><use href="#s-term"/></svg>Terminated<svg class="zi"><use href="#z-in"/></svg><svg class="zi"><use href="#z-out"/></svg></span><span>t2.micro</span><span>–</span><span class="al">No alarms<svg class="al-p"><use href="#a-plus"/></svg></span><span>us-east-1b</span><span>–</span><span>–</span><span>–</span></div>
      <div class="ar"><span class="dc0"><span class="cbx"></span></span><span></span><a class="lnk">i-09fcf095d9ee191aa</a><span class="st st-g"><svg class="st-i"><use href="#s-term"/></svg>Terminated<svg class="zi"><use href="#z-in"/></svg><svg class="zi"><use href="#z-out"/></svg></span><span>t2.micro</span><span>–</span><span class="al">No alarms<svg class="al-p"><use href="#a-plus"/></svg></span><span>us-east-1b</span><span>–</span><span>–</span><span>–</span></div>
      <div class="ar"><span class="dc0"><span class="cbx"></span></span><span></span><a class="lnk">i-0a9ea1aa1f4f9d36d</a><span class="st st-g"><svg class="st-i"><use href="#s-term"/></svg>Terminated<svg class="zi"><use href="#z-in"/></svg><svg class="zi"><use href="#z-out"/></svg></span><span>t2.micro</span><span>–</span><span class="al">No alarms<svg class="al-p"><use href="#a-plus"/></svg></span><span>us-east-1b</span><span>–</span><span>–</span><span>–</span></div>
      <div class="ar"><span class="dc0"><span class="cbx"></span></span><span></span><a class="lnk">i-01666df964385bdf2</a><span class="st st-g"><svg class="st-i"><use href="#s-term"/></svg>Terminated<svg class="zi"><use href="#z-in"/></svg><svg class="zi"><use href="#z-out"/></svg></span><span>t2.micro</span><span>–</span><span class="al">No alarms<svg class="al-p"><use href="#a-plus"/></svg></span><span>us-east-1b</span><span>–</span><span>–</span><span>–</span></div>
      <div class="hbar"><span class="hb-l"></span><span class="hb-th"></span><span class="hb-r"></span></div>
      <div class="pane">
        <div class="pane-h"><span class="pane-eq"></span></div>
        <div class="pane-r"><h3>Select an instance</h3><span class="pane-act"><svg class="pane-g"><use href="#a-gear"/></svg><span class="pane-sep"></span><svg class="pane-x" viewBox="0 0 14 14"><path d="M1 0l12 14M13 0L1 14" stroke="#545b64" stroke-width="1.500"/></svg></span></div>
      </div>
    </main>
    <div class="vbar vbar-main"><span class="vb-up"></span><span class="vb-th"></span><span class="vb-dn"></span></div>
  </div>
  <footer class="afoot">
    <svg class="af-ic"><use href="#a-shell"/></svg><span class="af-cs">CloudShell</span><span class="af-fb">Feedback</span>
    <span class="af-r"><span class="af-cp">© 2023, Amazon Web Services, Inc. or its affiliates.</span><span class="af-pr">Privacy</span><span class="af-te">Terms</span><span>Cookie preferences</span></span>
  </footer>
</section>

<section class="clock">
  <nav class="ck-nav">
    <span class="ck-ham"><svg viewBox="0 0 16 14"><path d="M0 1h16M0 7h16M0 13h16" stroke="#1a1a1a"/></svg></span>
    <span class="ck-it"><svg><use href="#c-world"/></svg></span>
    <span class="ck-it"><svg><use href="#c-hour"/></svg></span>
    <span class="ck-it"><svg><use href="#c-bell"/></svg></span>
    <span class="ck-it ck-on"><svg><use href="#c-stop"/></svg></span>
    <span class="ck-it"><svg><use href="#c-globe"/></svg></span>
    <span class="ck-bf">BF</span>
    <span class="ck-set"><svg><use href="#c-set"/></svg></span>
  </nav>
  <div class="ck-main">
    <div class="ck-title">
      <svg class="ck-logo" viewBox="0 0 16 20"><rect x="1" y="1" width="14" height="18" rx="2" fill="#8d9499"/><circle cx="8" cy="9" r="6" fill="#eef0f1"/><path d="M8 9L4 5M8 9l3-4" stroke="#333" stroke-width="1.200"/><path d="M8 9v5" stroke="#e0562b" stroke-width="1.600"/></svg>
      <span class="ck-name">Clock</span>
      <span class="ck-ctl">
        <svg viewBox="0 0 12 12"><path d="M1 6h10" stroke="#8a8a8a"/></svg>
        <svg viewBox="0 0 12 12"><rect x="1.500" y="1.500" width="9" height="9" rx="1" fill="none" stroke="#8a8a8a"/></svg>
        <svg viewBox="0 0 12 12"><path d="M1 1l10 10M11 1L1 11" stroke="#8a8a8a"/></svg>
      </span>
    </div>
    <div class="ck-exp">
      <svg viewBox="0 0 16 16"><path d="M1 15L15 1M9 1h6v6M1 9v6h6" fill="none" stroke="#1a1a1a"/></svg>
      <svg viewBox="0 0 16 16"><path d="M7 1h8v14H8M7 1v7h8M1 4v-3h3M1 15l5-5M2 10h4v4" fill="none" stroke="#1a1a1a"/></svg>
    </div>
    <div class="ck-time">00:01:26<span class="ck-frac">.06</span></div>
    <div class="ck-labels"><span>hr</span><span>min</span><span>sec</span></div>
    <div class="ck-btns">
      <span class="ck-pause"><svg viewBox="0 0 24 32"><rect x="1" y="2" width="8" height="28" rx="3.500" fill="#fff"/><rect x="15" y="2" width="8" height="28" rx="3.500" fill="#fff"/></svg></span>
      <span class="ck-rnd"><svg viewBox="0 0 22 26"><path d="M1 1v24" stroke="#111" stroke-width="1.300"/><path d="M1 1h20l-4 8 4 8H1z" fill="#111"/></svg></span>
      <span class="ck-rnd"><svg viewBox="0 0 22 26"><path d="M6 7h7a8 8 0 1 1-9 7M9 1L3 7l6 5" fill="none" stroke="#111" stroke-width="1.300"/></svg></span>
    </div>
  </div>
</section>
</body>
</html>
```
FILE: styles.css
```css
*{box-sizing:border-box}
html,body{margin:0;padding:0}
body{position:relative;width:3635px;height:1034px;overflow:hidden;background:#cdd6e4;font-family:Roboto,"Liberation Sans",sans-serif}
.defs{position:absolute}
svg{display:block;flex:none}
.stoptxt{font:700 6.500px "Liberation Sans",sans-serif;fill:#eee}
.helptxt{font:400 17px "Liberation Sans",sans-serif;fill:#fff}

/* JMeter window */
.jm{position:absolute;left:0;top:0;width:1516px;height:1031px;display:flex;flex-direction:column;background:#3c3f41;color:#bbb;font-size:11.800px;border-top:1px solid #8e8e8e}
.jm-title{height:30px;background:#f3f3f3;display:flex;align-items:center;padding-left:7px;color:#666;font-size:12px}
.jm-feather{width:10px;height:22px}
.jm-title-t{margin-left:9px}
.jm-ctrl{margin-left:auto;display:flex;align-items:center;gap:32px;padding-right:17px}
.jm-c-min{width:10px;height:1px;background:#666}
.jm-c-max{width:10px;height:10px;border:1px solid #666}
.jm-c-x{width:12px;height:12px}
.jm-menu{height:21px;display:flex;align-items:center;gap:14px;border-bottom:1px solid #55585a;font-size:12px;color:#bbb}
.jm-tools{height:35px;display:flex;align-items:center;border-bottom:1px solid #2f3234}
.tb{width:28px;height:24px}
.tb-sep{width:1px;height:24px;background:#555;margin:0 1.500px}
.jm-stat{margin-left:auto;display:flex;align-items:center;font-size:11px}
.jm-elapsed{margin-right:7px}
.jm-warn{width:22px;height:22px}
.jm-err{color:#f00;margin:0 7px 0 5px;font-size:12px}
.jm-count{font-size:12px}
.jm-ball{width:22px;height:24px;margin:0 3px 0 5px}
.jm-body{flex:1;display:flex;min-height:0}
.jm-tree{width:382px;padding-top:2px;border-right:2px solid #515456;background:linear-gradient(#4c4f51,#4c4f51) 3px 21px/1px 99px no-repeat,linear-gradient(#4c4f51,#4c4f51) 23px 41px/1px 79px no-repeat,#3c3f41;font-size:11.600px;color:#b5b5b5;padding-right:9px}
.tr{height:20px;display:flex;align-items:center;white-space:nowrap}
.tr-car{width:10px;height:10px}
.tr0 .tr-ic{margin:0 5px 0 8px;width:16px;height:20px}
.tr1{padding-left:19px}
.tr1 .tr-ic{margin:0 3px 0 7px;width:20px;height:20px}
.tr2{padding-left:57px}
.tr2 .tr-ic{margin-right:6px;width:16px;height:20px}
.tr-sel{background:#0d293e;color:#bbb}
.jm-main{flex:1;min-width:0;display:flex;flex-direction:column;padding-top:12px}
.jm-h{margin:0 0 0 9px;height:24px;line-height:24px;font-size:15.200px;font-weight:400;color:#bbb}
.jm-field{display:flex;align-items:center;height:24px;margin:4px 10px 0 9px}
.jm-field2{margin-top:7px}
.jm-field label{width:69px;font-size:12px}
.jm-input{flex:1;height:24px;line-height:22px;background:#45494a;border:1px solid #646464;padding-left:3px;font-size:11.600px}
.jm-legend{height:25px;margin:0 12px 0 9px;display:flex;align-items:center;font-size:11.600px}
.jm-legend::before{content:"";width:5px;height:1px;background:#555;margin-right:2px}
.jm-legend::after{content:"";flex:1;height:1px;background:#555;margin-left:2px}
.jm-file{display:flex;align-items:center;height:24px;margin-left:13px}
.jm-fl{width:55px;font-size:11.700px}
.jm-fi{flex:none;width:642px}
.jm-btn{height:24px;display:flex;align-items:center;justify-content:center;background:#45494a;border:1px solid #5e6060;border-radius:2px}
.jm-browse{width:65px;margin-left:10px;font-size:8.500px}
.jm-log{width:105px;margin-left:7px;font-size:12px;white-space:nowrap}
.jm-cb{width:14px;height:14px;border:1px solid #6b6b6b;background:#43494a;border-radius:2px;display:flex;align-items:center;justify-content:center;font-size:11px;flex:none}
.jm-cbt{margin-left:6px;font-size:11.400px}
.jm-err-t{width:41px}
.jm-suc-t{width:59px}
.jm-conf{width:81px;font-size:12px}
.jh{margin-top:21px;height:26px;display:grid;grid-template-columns:repeat(9,111.750px) 1fr;background:#45494a;border-top:1px solid #303234;border-bottom:1px solid #303234;font-size:12px}
.jh span{display:flex;align-items:center;justify-content:center;border-right:1px solid #303234;white-space:nowrap}
.jt{display:flex;padding:5px 0 0 2px}
.jrows{width:1118px;border-top:1px solid #4f5254}
.jr{height:20px;display:grid;grid-template-columns:repeat(10,111.800px);border-bottom:1px solid #55585a;font-size:11.800px;letter-spacing:-.6px;color:#bbb}
.jr span{display:flex;align-items:center;justify-content:flex-end;padding-right:5px;border-right:1px solid #4c4f51;white-space:nowrap;overflow:hidden}
.jr .l{justify-content:flex-start;padding-left:6px;letter-spacing:0;font-size:11.600px}
.jr .c{justify-content:center}
.sh{width:14px;height:17px}
.jscroll{width:8px;height:635px;margin:67px 0 0 4px;background:#57595b}
.jb{flex:1;display:flex;align-items:center;padding-left:6px;color:#bbb;white-space:nowrap}
.jb b{font-weight:400;margin-left:5px}
.jb1{width:139px;display:flex;align-items:center;gap:5px}
.jb2{width:247px;display:flex;align-items:center;gap:6px}
.jb3{width:192px}
.jb-d{color:#111}
.jb4{width:158px;color:#000}
.jb5{width:125px;color:#00f}
.jb6{color:#f00}

/* Word sliver */
.word{position:absolute;left:1516px;top:0;width:199px;height:1031px;background:#f3f3f3;display:flex;flex-direction:column;font-size:13px;color:#333}
.wd-title{height:46px;padding-left:8px;display:flex;align-items:center}
.wd-ic{width:48px;height:18px}
.wd-btns{height:24px;margin-top:5px;display:flex;white-space:nowrap}
.wd-sliver{width:6px;border:1px solid #aaa;border-left:0;border-radius:0 4px 4px 0;background:#fff}
.wd-edit{width:84px;margin-left:9px;border:1px solid #999;background:#fff;border-radius:4px;display:flex;align-items:center;padding-left:3px;gap:3px}
.wd-pen{width:14px;height:18px}
.wd-chev{width:8px;height:8px}
.wd-share{width:80px;margin-left:8px;background:#185abd;color:#fff;border-radius:4px;display:flex;align-items:center;padding-left:6px;gap:3px}
.wd-chev2{width:8px;height:8px;margin-left:auto;margin-right:4px}
.wd-rib{width:191px;height:100px;margin-top:3px;background:#fff;border-radius:0 8px 8px 0;box-shadow:0 1px 3px rgba(0,0,0,.2);display:flex;padding-top:5px;font-size:12.500px}
.wd-part{width:26px;height:90px;border-right:1px solid #d4d4d4;display:flex;flex-direction:column;padding-left:1px}
.wd-parti{width:11px;height:30px;margin-top:3px}
.wd-partt{margin-top:7px;height:24px;line-height:24px}
.wd-partb{margin-top:14px;height:18px;line-height:18px}
.wd-add{width:62px;height:90px;border-right:1px solid #d4d4d4;display:flex;flex-direction:column;align-items:center}
.wd-addi{width:28px;height:28px;margin-top:4px}
.wd-addt{margin-top:1px;height:24px;line-height:24px}
.wd-addb{margin-top:16px;height:18px;line-height:18px}
.wd-down{width:12px;height:8px;margin:77px 0 0 82px}
.wd-status{margin-top:auto;height:21px;background:#fafafa;display:flex;align-items:center;font-size:12px}
.wd-st-ic{width:5px;height:16px;margin-left:2px;border:1px solid #555;border-left:0}
.wd-minus{margin-left:19px}
.wd-slider{width:98px;height:1px;background:#555;margin-left:11px;display:flex;justify-content:center;align-items:center}
.wd-knob{width:2px;height:12px;background:#444}
.wd-plus{margin-left:7px}
.wd-pct{margin-left:10px;font-size:11px}

/* Chrome */
.chrome{position:absolute;left:1715px;top:0;width:1920px;height:1034px;background:#fff;display:flex;flex-direction:column;font-size:13px}
.tabs{height:34px;background:#dee1e6;display:flex;padding-left:9px;align-items:center;color:#3c4043;font-size:11.600px}
.tab{width:182.400px;height:34px;display:flex;align-items:center;padding-left:11px;position:relative;flex:none}
.tab::after{content:"";position:absolute;right:0;top:7px;height:20px;width:1px;background:#9aa0a6}
.tab-on{background:#fff;border-radius:10px 10px 0 0}
.tab-on::after,.tab-pre::after{display:none}
.tab-ic{width:16px;height:16px}
.tab-t{width:115px;margin-left:8px;white-space:nowrap;overflow:hidden;-webkit-mask-image:linear-gradient(90deg,#000 85%,transparent);mask-image:linear-gradient(90deg,#000 85%,transparent)}
.tab-x{width:11px;height:11px;margin-left:11px}
.tab-new{width:14px;height:14px;margin-left:16px}
.win-ctl{margin-left:auto;display:flex;gap:34px;padding-right:17px}
.win-ctl svg{width:12px;height:12px}
.omni-row{height:41px;display:flex;align-items:center;padding-left:14px}
.nav-ic{width:16px;height:16px;margin-right:16px}
.omni{width:1519px;height:34px;background:#f1f3f4;border-radius:17px;display:flex;align-items:center;padding-left:11px;margin-left:-1px;color:#3c4043;font-size:13.600px}
.lock{width:10px;height:12px}
.url{margin-left:12px;white-space:nowrap;flex:none}
.om-ic{width:16px;height:16px;margin-left:16px}
.url + .om-ic{margin-left:auto}
.om-ic:last-child{margin-right:8px}
.ext-ic{width:16px;height:16px;margin-left:16px}
.avatar{width:24px;height:24px;margin-left:12px}
.upd{width:81px;height:28px;margin-left:6px;border:1.500px solid #d93025;border-radius:14px;background:#fdf0ee;color:#c5221f;font-size:13px;display:flex;align-items:center;padding-left:13px}
.upd-dots{width:4px;height:16px;margin-left:auto;margin-right:11px}
.bm{height:33px;display:flex;align-items:center;padding-left:15px;gap:18px;color:#3c4043;font-size:12.300px;white-space:nowrap;border-bottom:1px solid #dadce0}
.bm-i{display:flex;align-items:center;gap:11px}
.bm-f{width:12px;height:14px}
.bm-g{width:15px;height:15px;margin-right:-2px}
.aws-nav{height:42px;background:#232f3e;display:flex;align-items:center;color:#fff;padding-left:18px}
.aws-logo{width:31px;display:flex;flex-direction:column;align-items:center}
.aws-word{font:500 20px/16px "Open Sans",sans-serif;letter-spacing:-.5px}
.aws-smile{width:31px;height:7px}
.an-sep{width:1px;height:22px;background:#414d5c;margin:0 16px 0 17px}
.an-grid{width:16px;height:16px}
.an-serv{margin-left:8px;font:600 13px "Open Sans",sans-serif;letter-spacing:-.4px}
.an-search{width:540px;height:30px;margin-left:16px;background:#161e2d;border:1px solid #879596;border-radius:2px;display:flex;align-items:center;padding:0 10px 0 12px;color:#d5dbdb;font:14px "Open Sans",sans-serif}
.an-mag{width:14px;height:16px;margin-right:11px}
.an-search em{color:#aab7b8}
.an-kbd{margin-left:auto}
.an-right{margin-left:auto;display:flex;align-items:center;font:600 12px "Open Sans",sans-serif;letter-spacing:-.3px}
.an-ic{width:18px;height:20px;color:#fff}
.an-v{width:1px;height:26px;background:#414d5c;margin:0 15px}
.an-gear{width:18px;height:20px}
.an-t{display:flex;align-items:center}
.an-reg{width:76px;padding-left:2px}
.an-usr{padding-left:2px;padding-right:18px}
.an-car{width:10px;height:10px;margin-left:6px}
.con{flex:1;min-height:0;display:flex;font:14px "Open Sans",sans-serif;color:#16191f;letter-spacing:-.1px}
.side{width:224px;padding-top:16px;color:#545b64;background:#fff;font-size:14px;white-space:nowrap;letter-spacing:-.35px}
.si{height:30px;line-height:30px;padding-left:32px}
.si-top{display:flex;align-items:center}
.si-x{width:14px;height:16px;margin-left:auto;margin-right:23px}
.si-on{color:#0073bb;font-weight:600}
.si-new{height:22px;line-height:16px;padding-left:40px;font-size:12.500px;font-weight:600;color:#0073bb}
.si-new span{border-bottom:1px dashed #0073bb;display:inline-block;line-height:14px}
.ss{margin-top:12px;height:31px;display:flex;align-items:center;padding-left:13px;font-weight:700;color:#545b64}
.ss-c{width:11px;height:11px;margin-right:7px;color:#545b64}
.vbar{width:16px;background:#f1f1f1;display:flex;flex-direction:column;align-items:center;flex:none}
.vb-up{margin-top:7px;border:4px solid transparent;border-bottom:5px solid #a3a3a3;border-top:0}
.vb-th{width:14px;background:#c1c1c1;margin-top:5px}
.vbar-side .vb-th{height:660px}
.vbar-main .vb-th{height:518px}
.vb-dn{margin-top:auto;margin-bottom:6px;border:4px solid transparent;border-top:5px solid #505050;border-bottom:0}
.inst{flex:1;min-width:0;display:flex;flex-direction:column;background:#fafafa;border-left:1px solid #eaeded}
.in-top{display:flex;align-items:center;height:28px;margin-top:10px;padding:0 21px 0 19px}
.in-h{margin:0;font-size:19px;font-weight:600;letter-spacing:-.5px;color:#16191f;white-space:nowrap}
.in-n{font-weight:400;color:#687078}
.in-info{font-size:12px;font-weight:700;color:#0073bb;letter-spacing:0;margin-left:3px}
.in-btns{margin-left:auto;display:flex;gap:8px;font-size:15px;font-weight:600;color:#545b64}
.btn{height:28px;border:1px solid #545b64;border-radius:2px;background:#fff;display:flex;align-items:center;padding:0 11px 0 20px;white-space:nowrap;letter-spacing:-.3px}
.btn-r{width:50px;padding:0;justify-content:center}
.btn-ri{width:17px;height:19px}
.btn-dis{width:98px;padding:0;justify-content:center;color:#aab7b8;border-color:#d5dbdb}
.btn-st{width:156px}
.btn-ac{width:113px}
.btn-c{width:11px;height:11px;margin-left:auto;color:#545b64}
.btn-la{width:154px;padding:0;justify-content:center;background:#f90;border-color:#f90;color:#16191f}
.btn-lc{width:31px;padding:0;margin-left:-7px;justify-content:center;background:#f90;border-color:#f90}
.btn-lc .btn-c{margin:0;color:#16191f}
.in-sr{display:flex;align-items:center;height:28px;margin-top:6px;padding:0 21px 0 19px}
.in-search{width:648px;height:28px;background:#fff;border:1px solid #545b64;border-radius:2px;display:flex;align-items:center;padding-left:8px;color:#545b64;letter-spacing:-.3px}
.in-mag{width:16px;height:20px;margin-right:9px}
.pg{margin-left:auto;display:flex;align-items:center;padding-right:2px}
.pg-a{width:9px;height:24px}
.pg-n{width:47px;text-align:center;font-size:14px;color:#16191f}
.pg-sep{width:1px;height:26px;background:#eaeded;margin:0 14px 0 14px}
.pg-g{width:17px;height:20px;color:#687078}
.ar{display:grid;grid-template-columns:70px 140px 200px 160px 150px 150px 130px 170px 200px 150px 144px;height:33.500px;padding-top:2px;align-items:center;background:#fff;border-bottom:1px solid #eaeded;white-space:nowrap}
.ah{height:33px;padding-top:0;margin-top:10px;background:#fafafa;border-top:2px solid #eaeded;border-bottom:2px solid #eaeded;font-weight:700;color:#545b64;letter-spacing:-.35px}
.hc{height:20px;margin-right:16px;border-right:1px solid #687078;display:flex;align-items:center;padding-right:15px;justify-content:space-between}
.hc0{padding-left:20px;border-right-color:#eaeded}
.hc-n{font-weight:600}
.hc-p{width:14px;height:16px;margin:0 auto 0 6px}
.hc-f{width:12px;height:12px}
.hc-u{width:12px;height:12px;color:#16191f}
.hc-b{color:#16191f}
.hc-l{margin-right:10px}
.cbx{width:14px;height:15px;border:1px solid #687078;border-radius:2px;background:#fff;display:block}
.dc0{padding-left:20px}
.lnk{color:#0073bb;letter-spacing:-.05px}
.st{display:flex;align-items:center;margin-right:16px;overflow:hidden;letter-spacing:-.3px}
.st-i{width:16px;height:18px;margin-right:4px}
.st-ok{color:#1d8102}
.st-g{color:#687078}
.zi{width:16px;height:17px;margin-left:5px}
.zi + .zi{margin-left:8px}
.al{display:flex;align-items:center;letter-spacing:-.35px}
.al-p{width:16px;height:16px;margin-left:13px}
.hbar{height:14px;margin-top:4px;background:#f1f1f1;display:flex;align-items:center;flex:none}
.hb-l{margin-left:6px;border:4px solid transparent;border-right:4px solid #a3a3a3;border-left:0}
.hb-th{width:998px;height:14px;background:#c1c1c1;margin-left:7px}
.hb-r{margin-left:auto;margin-right:4px;border:4px solid transparent;border-left:4px solid #505050;border-right:0}
.pane{flex:1;margin-top:1px;background:#fff;border-top:1px solid #d5dbdb;padding:0 21px 0 19px}
.pane-h{height:15px;display:flex;justify-content:center;align-items:center;padding-right:2px}
.pane-eq{width:12px;height:6px;border-top:2px solid #545b64;border-bottom:2px solid #545b64;margin-top:3px;margin-left:-4px}
.pane-r{display:flex;align-items:center;height:24px}
.pane-r h3{margin:0;font-size:16px;font-weight:700;letter-spacing:-.3px}
.pane-act{margin-left:auto;display:flex;align-items:center}
.pane-g{width:17px;height:20px;color:#687078}
.pane-sep{width:1px;height:24px;background:#eaeded;margin:0 10px}
.pane-x{width:13px;height:14px;margin-right:7px}
.afoot{height:32px;background:#232f3e;color:#d5dbdb;display:flex;align-items:center;padding-left:15px;font:600 13px "Open Sans",sans-serif;letter-spacing:-.35px;margin-bottom:1px;white-space:nowrap;border-top:1px solid #414d5c;flex:none}
.af-ic{width:16px;height:18px;color:#fff}
.af-cs{margin-left:5px}
.af-fb{margin-left:24px}
.af-r{margin-left:auto;padding-right:16px;display:flex}
.af-pr{margin-left:30px}
.af-te{margin-left:26px;margin-right:25px}

/* Clock */
.clock{position:absolute;left:560px;top:347px;width:726px;height:507px;background:#fbfbfb;border-radius:8px;display:flex;box-shadow:0 8px 24px rgba(0,0,0,.3);overflow:hidden;color:#1a1a1a;font-family:"Liberation Sans",sans-serif}
.ck-nav{width:47px;background:#f3f3f3;border-right:1px solid #e8e8e8;display:flex;flex-direction:column;align-items:center}
.ck-ham{height:36px;display:flex;align-items:center}
.ck-ham svg{width:16px;height:14px}
.ck-it{width:40px;height:40px;display:flex;align-items:center;justify-content:center;position:relative;color:#222}
.ck-it svg{width:17px;height:18px}
.ck-on::before{content:"";position:absolute;left:0;top:2px;width:40px;height:36px;background:#ededed;border-radius:4px}
.ck-on::after{content:"";position:absolute;left:0;top:10px;width:3px;height:16px;background:#0067c0;border-radius:2px}
.ck-on svg{position:relative}
.ck-bf{margin-top:auto;width:24px;height:24px;border-radius:50%;background:#dedede;display:flex;align-items:center;justify-content:center;font:11px Roboto,sans-serif;margin-bottom:6px;color:#333}
.ck-set{height:48px;display:flex;align-items:center;color:#333}
.ck-set svg{width:17px;height:18px}
.ck-main{flex:1;display:flex;flex-direction:column}
.ck-title{height:36px;display:flex;align-items:center;padding-left:8px}
.ck-logo{width:15px;height:18px}
.ck-name{margin-left:15px;font:13px Roboto,sans-serif;color:#333}
.ck-ctl{margin-left:auto;display:flex}
.ck-ctl svg{width:46px;height:11px}
.ck-exp{height:20px;margin-top:68px;display:flex;justify-content:flex-end;gap:20px;padding-right:89px}
.ck-exp svg{width:20px;height:20px;padding:2px}
.ck-time{margin-top:7px;height:80px;padding-left:78px;font:300 112px/80px Roboto,sans-serif;letter-spacing:-2px;white-space:nowrap;color:#1a1a1a}
.ck-frac{font-size:80px;letter-spacing:.5px}
.ck-labels{margin-top:13px;height:30px;padding-left:68px;display:grid;grid-template-columns:144px 144px 146px;text-align:center;font:20px/30px Roboto,sans-serif}
.ck-btns{margin-top:40px;margin-left:215px;display:flex;align-items:center;gap:27px}
.ck-pause{width:67px;height:67px;border-radius:50%;background:#0067c0;display:flex;align-items:center;justify-content:center}
.ck-pause svg{width:24px;height:24px}
.ck-rnd{width:64px;height:64px;border-radius:50%;background:#fff;border:1px solid #e8e8e8;box-shadow:0 1px 2px rgba(0,0,0,.18);display:flex;align-items:center;justify-content:center}
.ck-rnd svg{width:22px;height:24px}
```
